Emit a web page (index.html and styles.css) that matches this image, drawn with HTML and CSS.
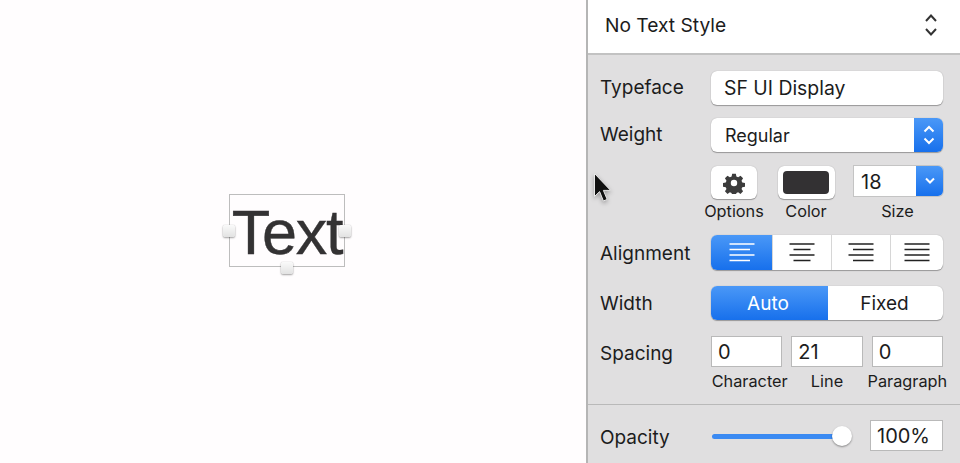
FILE: index.html
```html
<!DOCTYPE html>
<html lang="en">
<head>
  <meta charset="UTF-8">
  <title>Text Inspector</title>
  <link rel="stylesheet" href="styles.css">
</head>
<body>
  <div class="app">
    <div class="canvas">
      <div class="selection">
        <span class="selection-text">Text</span>
        <span class="handle handle-left"></span>
        <span class="handle handle-right"></span>
        <span class="handle handle-bottom"></span>
      </div>
      <svg class="cursor" width="20" height="32" viewBox="0 0 20 32">
        <path d="M1.500 1.500V24.500L6.600 19.600L10.400 29L14.200 27.400L10.400 18.400H17.600Z" fill="#111" stroke="#e8e8e8" stroke-width="1"/>
      </svg>
    </div>

    <div class="inspector">
      <div class="style-picker">
        <span>No Text Style</span>
        <svg width="14" height="24" viewBox="0 0 14 24" fill="none" stroke="#333" stroke-width="2">
          <path d="M2 8L7 2.500L12 8"/>
          <path d="M2 16L7 21.500L12 16"/>
        </svg>
      </div>

      <div class="props">
        <div class="row row-typeface">
          <label class="row-label">Typeface</label>
          <div class="control text-control">SF UI Display</div>
        </div>

        <div class="row row-weight">
          <label class="row-label">Weight</label>
          <div class="control select-control">
            <span class="select-value">Regular</span>
            <span class="stepper">
              <svg width="14" height="24" viewBox="0 0 14 24" fill="none" stroke="#fff" stroke-width="2">
                <path d="M2.500 8.500L7 4L11.500 8.500"/>
                <path d="M2.500 15.500L7 20L11.500 15.500"/>
              </svg>
            </span>
          </div>
        </div>

        <div class="tools">
          <div class="tool tool-options">
            <div class="tool-button options-button">
              <svg width="22" height="22" viewBox="0 0 24 24">
                <path fill="#3c3c3c" fill-rule="evenodd" d="M10 2h4l.6 3 1.900.8 2.600-1.700 2.800 2.800-1.700 2.600.8 1.900 3 .6v4l-3 .6-.8 1.900 1.700 2.600-2.800 2.800-2.600-1.700-1.900.8-.6 3h-4l-.6-3-1.900-.8-2.600 1.700-2.800-2.800 1.700-2.600-.8-1.900-3-.6v-4l3-.6.8-1.900-1.700-2.600 2.800-2.800 2.600 1.700 1.900-.8zM12 8.500a3.500 3.500 0 1 0 0 7 3.500 3.500 0 0 0 0-7z"/>
              </svg>
            </div>
            <span class="tool-label">Options</span>
          </div>
          <div class="tool tool-color">
            <div class="tool-button color-button"><span class="color-swatch"></span></div>
            <span class="tool-label">Color</span>
          </div>
          <div class="tool tool-size">
            <div class="size-combo">
              <span class="size-value">18</span>
              <span class="size-arrow">
                <svg width="12" height="8" viewBox="0 0 12 8" fill="none" stroke="#fff" stroke-width="2">
                  <path d="M2 1.500L6 5.500L10 1.500"/>
                </svg>
              </span>
            </div>
            <span class="tool-label">Size</span>
          </div>
        </div>

        <div class="row row-align">
          <label class="row-label">Alignment</label>
          <div class="control segments">
            <div class="segment segment-active align-seg align-first">
              <svg width="26" height="20" viewBox="0 0 26 20" stroke="#fff" stroke-width="1.500">
                <path d="M0.500 1H25.500M0.500 6.500H21M0.500 12H25.500M0.500 17.500H21"/>
              </svg>
            </div>
            <div class="segment align-seg align-center">
              <svg width="26" height="20" viewBox="0 0 26 20" stroke="#222" stroke-width="1.600">
                <path d="M0.500 1H25.500M4.500 6.500H21.500M0.500 12H25.500M4.500 17.500H21.500"/>
              </svg>
            </div>
            <div class="segment align-seg align-right">
              <svg width="26" height="20" viewBox="0 0 26 20" stroke="#222" stroke-width="1.600">
                <path d="M0.500 1H25.500M5 6.500H25.500M0.500 12H25.500M5 17.500H25.500"/>
              </svg>
            </div>
            <div class="segment align-seg align-last">
              <svg width="26" height="20" viewBox="0 0 26 20" stroke="#222" stroke-width="1.600">
                <path d="M0.500 1H25.500M0.500 6.500H25.500M0.500 12H25.500M0.500 17.500H25.500"/>
              </svg>
            </div>
          </div>
        </div>

        <div class="row row-width">
          <label class="row-label">Width</label>
          <div class="control segments">
            <div class="segment segment-active width-auto">Auto</div>
            <div class="segment width-fixed">Fixed</div>
          </div>
        </div>

        <div class="row row-spacing">
          <label class="row-label">Spacing</label>
          <div class="spacing-fields">
            <div class="spacing-field">
              <div class="num-field">0</div>
              <span class="tool-label label-character">Character</span>
            </div>
            <div class="spacing-field">
              <div class="num-field">21</div>
              <span class="tool-label">Line</span>
            </div>
            <div class="spacing-field">
              <div class="num-field">0</div>
              <span class="tool-label">Paragraph</span>
            </div>
          </div>
        </div>
      </div>

      <div class="opacity">
        <label class="row-label opacity-label">Opacity</label>
        <div class="slider">
          <span class="slider-track"></span>
          <span class="slider-knob"></span>
        </div>
        <div class="num-field opacity-field">100%</div>
      </div>
    </div>
  </div>
</body>
</html>
```

FILE: styles.css
```css
body {
  margin: 0;
  font-family: Inter, Roboto, sans-serif;
  color: #1c1c1c;
  overflow: hidden;
}
.app {
  display: flex;
  width: 960px;
  height: 463px;
  overflow: hidden;
}
.canvas {
  position: relative;
  flex: none;
  width: 586px;
  background: #fffdfe;
}
.selection {
  position: absolute;
  left: 229px;
  top: 194px;
  width: 114px;
  height: 71px;
  border: 1px solid #bdbdbd;
  display: flex;
  justify-content: center;
}
.selection-text {
  font-family: "Liberation Sans", sans-serif;
  font-size: 63px;
  line-height: 75px;
  letter-spacing: -1.2px;
  color: #333233;
  white-space: nowrap;
  -webkit-text-stroke: 0.4px #333233;
}
.handle {
  position: absolute;
  width: 12px;
  height: 12px;
  border-radius: 2px;
  background: linear-gradient(#fafafa, #e2e2e2);
  box-shadow: 0 1px 2px rgba(0,0,0,0.35), 0 0 1px rgba(0,0,0,0.3);
}
.handle-left {
  left: -7px;
  top: 30px;
}
.handle-right {
  right: -7px;
  top: 30px;
}
.handle-bottom {
  left: 51px;
  bottom: -8px;
}
.cursor {
  position: absolute;
  left: 593px;
  top: 172px;
  z-index: 2;
  filter: drop-shadow(0 2px 2px rgba(0,0,0,0.3));
}
.inspector {
  flex: none;
  width: 374px;
  box-sizing: border-box;
  background: #e0dfe0;
  border-left: 2px solid #b5b5b5;
}
.style-picker {
  height: 50px;
  background: #fff;
  border-bottom: 2px solid #c2c2c2;
  padding: 0 22px 3px 17px;
  display: flex;
  align-items: center;
  justify-content: space-between;
  font-size: 19.2px;
}
.props {
  padding: 16px 17px 0 12px;
  height: 350px;
  box-sizing: border-box;
  border-bottom: 1px solid #b9b9b9;
}
.row {
  display: flex;
  align-items: center;
}
.row-label {
  width: 111px;
  flex: none;
  font-size: 19px;
  color: #1c1c1c;
}
.control {
  width: 232px;
  background: #fff;
  border-radius: 6px;
  box-shadow: 0 1px 1px rgba(0,0,0,0.3), 0 0 1px rgba(0,0,0,0.3);
  box-sizing: border-box;
  font-size: 19px;
}
.text-control {
  height: 34px;
  line-height: 34px;
  padding-left: 13px;
  font-size: 19.4px;
}
.row-typeface .row-label {
  padding-bottom: 2px;
}
.row-weight {
  margin-top: 13px;
}
.row-weight .row-label {
  padding-bottom: 2px;
}
.select-control {
  height: 34px;
  display: flex;
  justify-content: space-between;
  overflow: hidden;
}
.select-value {
  padding-left: 14px;
  line-height: 36px;
  font-size: 18px;
}
.stepper {
  width: 29px;
  background: linear-gradient(#4a98f7, #1770ec);
  display: flex;
  align-items: center;
  justify-content: center;
}
.tools {
  display: flex;
  margin: 14px 0 0 104px;
}
.tool {
  display: flex;
  flex-direction: column;
  align-items: center;
}
.tool-label {
  font-size: 16.3px;
  line-height: 18px;
  color: #1c1c1c;
  white-space: nowrap;
}
.label-character {
  margin-left: 6px;
}
.tool-options {
  width: 60px;
}
.tool-color {
  width: 58px;
  margin-left: 13px;
}
.tool-size {
  width: 89px;
  margin-left: 19px;
}
.tool-size .tool-label {
  margin-right: 2px;
}
.tool-button {
  background: #fff;
  border-radius: 6px;
  box-shadow: 0 1px 1px rgba(0,0,0,0.3), 0 0 1px rgba(0,0,0,0.3);
  display: flex;
  align-items: center;
  justify-content: center;
  margin-bottom: 3px;
}
.options-button {
  width: 46px;
  height: 33px;
}
.color-button {
  width: 57px;
  height: 33px;
}
.color-swatch {
  width: 46px;
  height: 23px;
  background: #333133;
  border-radius: 4px;
}
.size-combo {
  width: 89px;
  height: 30px;
  margin: 0 0 6px;
  display: flex;
  background: #fff;
  border-radius: 0 5px 5px 0;
  box-shadow: 0 0 0 1px #c4c4c4;
  font-size: 20px;
}
.size-value {
  flex: 1;
  padding-left: 7px;
  line-height: 32px;
}
.size-arrow {
  width: 27px;
  background: linear-gradient(#4a98f7, #1770ec);
  border-radius: 0 5px 5px 0;
  display: flex;
  align-items: center;
  justify-content: center;
}
.row-align {
  margin-top: 15px;
}
.row-align .row-label {
  padding-top: 2px;
}
.segments {
  height: 35px;
  display: flex;
  overflow: hidden;
}
.segment {
  display: flex;
  align-items: center;
  justify-content: center;
}
.segment-active {
  background: linear-gradient(#4a98f7, #1770ec);
  color: #fff;
}
.align-first {
  width: 61px;
}
.align-center,
.align-right {
  width: 59px;
  border-left: 1px solid #d6d6d6;
  box-sizing: border-box;
}
.align-last {
  flex: 1;
  border-left: 1px solid #d6d6d6;
}
.row-width {
  margin-top: 16px;
}
.row-width .segments {
  height: 34px;
}
.width-auto {
  width: 117px;
  padding-right: 3px;
  box-sizing: border-box;
}
.width-fixed {
  flex: 1;
  padding-right: 2px;
}
.row-spacing {
  margin-top: 16px;
  align-items: flex-start;
}
.row-spacing .row-label {
  line-height: 36px;
}
.spacing-fields {
  width: 232px;
  display: flex;
  gap: 9px;
}
.spacing-field {
  flex: 1;
  min-width: 0;
  display: flex;
  flex-direction: column;
  align-items: center;
  gap: 5px;
}
.num-field {
  width: 100%;
  height: 31px;
  box-sizing: border-box;
  border: 1px solid #b9b9b9;
  background: #fff;
  font-size: 20px;
  line-height: 31px;
  padding-left: 6px;
}
.opacity {
  display: flex;
  align-items: center;
  padding: 15px 17px 0 12px;
}
.opacity-label {
  padding-top: 3px;
}
.slider {
  position: relative;
  flex: none;
  width: 141px;
  height: 22px;
  margin-right: 18px;
}
.slider-track {
  position: absolute;
  left: 1px;
  right: 4px;
  top: 9px;
  height: 5px;
  border-radius: 3px;
  background: #3b8af2;
}
.slider-knob {
  position: absolute;
  right: 0;
  top: 1px;
  width: 20px;
  height: 20px;
  border-radius: 50%;
  background: #fff;
  box-shadow: 0 1px 2px rgba(0,0,0,0.4);
}
.opacity-field {
  flex: none;
  width: 73px;
  padding-left: 6px;
}
```
